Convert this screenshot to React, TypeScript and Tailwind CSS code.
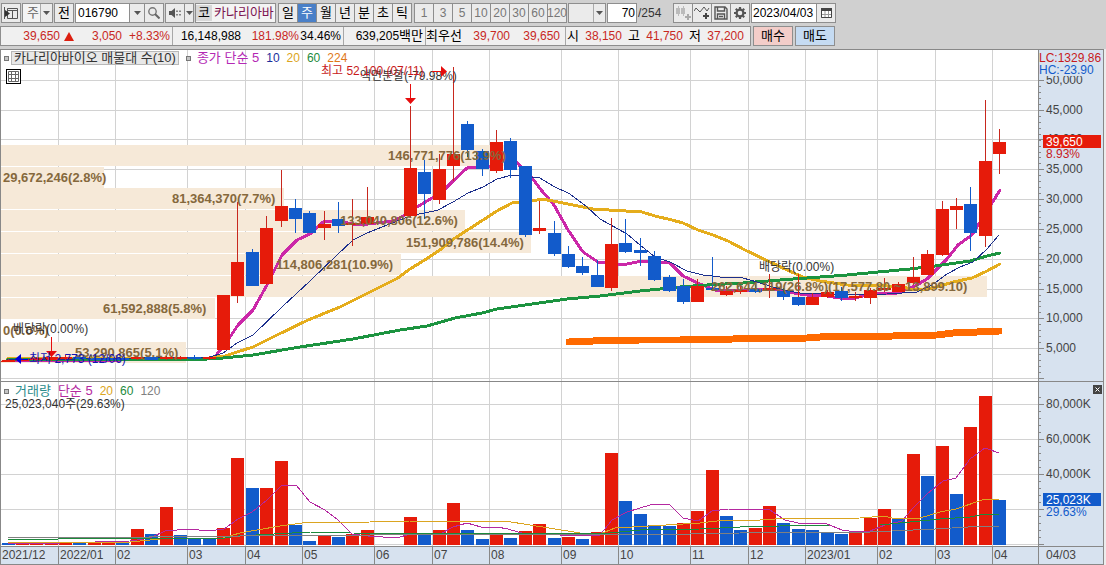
import { ReactNode } from "react";
import { clsx } from "clsx";

const RED = "#e61b0a";
const BLUE = "#125bcb";
const STEP = 14.37;
const centerOf = (i: number) => Math.floor(8 + STEP * i);

// [index, color, body top, body bottom, high, low]
type Candle = [number, "r" | "b", number, number, number, number];

const CANDLES: Candle[] = [
  [0, "r", 360, 361, 359, 361],
  [1, "r", 359, 361, 358, 361],
  [2, "r", 358, 360, 357, 361],
  [3, "r", 357, 360, 356, 361],
  [4, "r", 357, 359, 355, 360],
  [5, "b", 357, 359, 356, 360],
  [6, "b", 358, 360, 356, 361],
  [7, "b", 358, 360, 357, 361],
  [8, "b", 358, 360, 357, 360],
  [9, "r", 357, 359, 356, 360],
  [10, "b", 357, 360, 357, 360],
  [11, "r", 357, 359, 356, 360],
  [12, "r", 357, 359, 356, 360],
  [13, "b", 357, 359, 355, 360],
  [14, "r", 357, 359, 356, 360],
  [15, "r", 295, 350, 295, 350],
  [16, "r", 262, 296, 202, 303],
  [17, "b", 252, 286, 249, 286],
  [18, "r", 228, 284, 216, 285],
  [19, "r", 206, 221, 170, 227],
  [20, "b", 208, 219, 199, 233],
  [21, "b", 213, 233, 211, 233],
  [22, "r", 224, 228, 211, 240],
  [23, "b", 219, 226, 202, 233],
  [24, "r", 223, 225, 199, 246],
  [25, "r", 217, 224, 187, 224],
  [28, "r", 168, 216, 106, 217],
  [29, "b", 172, 194, 160, 219],
  [30, "r", 169, 200, 154, 204],
  [31, "r", 154, 166, 67, 181],
  [32, "b", 124, 150, 121, 157],
  [33, "b", 151, 169, 149, 176],
  [34, "r", 142, 171, 130, 173],
  [35, "b", 141, 170, 138, 178],
  [36, "b", 166, 235, 166, 237],
  [37, "r", 228, 231, 201, 234],
  [38, "b", 233, 254, 221, 256],
  [39, "b", 254, 267, 246, 268],
  [40, "b", 266, 273, 257, 275],
  [41, "b", 275, 287, 260, 287],
  [42, "r", 244, 288, 218, 291],
  [43, "b", 243, 252, 219, 253],
  [44, "b", 250, 253, 238, 266],
  [45, "b", 256, 280, 251, 281],
  [46, "b", 277, 291, 275, 292],
  [47, "b", 286, 302, 279, 304],
  [48, "r", 286, 302, 279, 302],
  [49, "b", 288, 290, 257, 290],
  [50, "r", 291, 295, 286, 296],
  [51, "r", 290, 292, 286, 294],
  [52, "b", 289, 292, 285, 293],
  [53, "r", 288, 290, 274, 298],
  [54, "b", 291, 297, 288, 300],
  [55, "b", 297, 305, 294, 306],
  [56, "r", 297, 305, 293, 305],
  [57, "r", 292, 297, 290, 298],
  [58, "b", 291, 298, 287, 301],
  [59, "r", 296, 298, 292, 301],
  [60, "r", 290, 298, 288, 304],
  [61, "r", 288, 290, 278, 292],
  [62, "r", 284, 292, 282, 292],
  [63, "r", 277, 283, 257, 285],
  [64, "r", 254, 275, 250, 275],
  [65, "r", 209, 255, 201, 256],
  [66, "r", 206, 210, 198, 229],
  [67, "b", 204, 233, 187, 251],
  [68, "r", 161, 236, 100, 247],
  [69, "r", 142, 154, 129, 174],
];

// [index, color, top]
const VOLUMES: [number, "r" | "b", number][] = [
  [0, "b", 543], [1, "r", 542], [2, "r", 543], [3, "r", 544], [4, "r", 542],
  [5, "b", 543], [6, "r", 543], [7, "r", 541], [8, "b", 543], [9, "r", 529],
  [10, "b", 534], [11, "r", 507], [12, "b", 535], [13, "b", 538], [14, "b", 539],
  [15, "r", 528], [16, "r", 458], [17, "b", 488], [18, "r", 488], [19, "r", 461],
  [20, "b", 525], [21, "b", 541], [22, "r", 536], [23, "b", 537], [24, "r", 534],
  [25, "r", 530], [28, "r", 517], [29, "b", 535], [30, "r", 530], [31, "r", 503],
  [32, "b", 530], [33, "b", 539], [34, "r", 535], [35, "b", 538], [36, "r", 531],
  [37, "r", 524], [38, "b", 538], [39, "r", 537], [40, "b", 539], [41, "r", 532],
  [42, "r", 453], [43, "b", 501], [44, "b", 514], [45, "b", 525], [46, "b", 526],
  [47, "r", 523], [48, "r", 511], [49, "r", 470], [50, "b", 516], [51, "b", 530],
  [52, "r", 528], [53, "r", 506], [54, "b", 523], [55, "b", 529], [56, "b", 530],
  [57, "b", 533], [58, "b", 534], [59, "r", 533], [60, "r", 518], [61, "r", 509],
  [62, "b", 519], [63, "r", 454], [64, "b", 476], [65, "r", 446], [66, "b", 494],
  [67, "r", 427], [68, "r", 396], [69, "b", 500],
];

const PROFILE = [
  { y: 145, end: 509, x: 388, label: "146,771,776(13.9%)" },
  { y: 167, end: 104, x: 3, label: "29,672,246(2.8%)" },
  { y: 188, end: 284, x: 172, label: "81,364,370(7.7%)" },
  { y: 210, end: 465, x: 340, label: "133,040,806(12.6%)" },
  { y: 232, end: 531, x: 406, label: "151,909,786(14.4%)" },
  { y: 254, end: 401, x: 276, label: "114,806,281(10.9%)" },
  { y: 276, end: 987, x: 711, label: "262,644,119(26.8%)(17,577.80 ~ 13,899.10)" },
  { y: 298, end: 215, x: 103, label: "61,592,888(5.8%)" },
  { y: 320, end: 1, x: 3, label: "0(0.0%)" },
  { y: 342, end: 186, x: 75, label: "53,290,865(5.1%)" },
];

const MONTHS: [number, string][] = [
  [0, "2021/12"], [58, "2022/01"], [115, "02"], [187, "03"], [245, "04"], [302, "05"],
  [374, "06"], [432, "07"], [489, "08"], [561, "09"], [618, "10"], [690, "11"],
  [748, "12"], [805, "2023/01"], [877, "02"], [935, "03"], [992, "04"],
];

const PRICE_LINES: [number, string][] = [
  [80, "50,000"], [110, "45,000"], [139, "40,000"], [169, "35,000"], [199, "30,000"],
  [229, "25,000"], [259, "20,000"], [289, "15,000"], [318, "10,000"], [348, "5,000"], [378, ""],
];

const VOLUME_LINES: [number, string][] = [
  [404, "80,000K"], [439, "60,000K"], [474, "40,000K"], [509, ""], [544, ""],
];

const MA5 =
  "7,360 120,360 205,359 215,357 230,337 238,325 253,310 267,285 282,255 297,240 310,234 323,222 337,221 353,224 368,224 393,221 403,216 417,207 432,198 445,189 453,181 467,168 488,167 503,160 515,160 520,166 532,178 542,191 554,205 568,230 583,252 598,262 612,264 627,264 642,261 655,262 670,263 683,276 700,284 715,290 747,291 760,289 777,289 787,292 807,295 827,296 840,298 855,298 870,294 897,293 915,286 927,279 937,269 947,259 958,245 972,235 978,225 987,213 992,203 1000,190";
const MA10 =
  "7,360 210,357 223,353 237,343 253,335 282,307 310,281 337,255 353,240 367,233 387,225 413,215 425,213 438,210 453,202 468,193 483,187 497,179 512,175 527,177 540,178 553,186 570,194 587,207 600,219 627,234 640,245 655,257 670,262 687,271 703,275 720,277 743,278 757,282 783,290 800,293 820,293 840,295 887,294 917,292 932,285 947,274 960,267 973,262 987,249 999,235";
const MA20 =
  "7,359 210,358 225,356 237,352 253,347 275,336 308,320 340,307 368,293 398,278 410,269 423,261 440,250 455,238 497,211 512,203 527,202 542,199 553,201 593,209 642,212 655,216 672,220 683,223 698,230 713,235 728,241 743,249 770,262 787,270 803,277 820,281 847,285 887,286 903,287 910,289 928,289 937,287 953,282 972,278 987,271 1000,264";
const MA60 =
  "7,360 210,359 223,358 253,355 300,347 353,339 400,330 427,326 455,318 482,313 497,309 525,305 567,299 600,296 640,291 680,287 707,285 743,283 780,280 807,278 847,275 910,269 935,266 970,261 987,256 1000,253";
const MA224 =
  "569,342 593,341 640,340 680,340 733,339 807,338 820,337 893,336 937,335 953,333 977,332 999,331";

const VOL5 =
  "8,543 60,543 130,541 150,538 165,531 190,529 208,531 224,529 238,519 252,512 267,500 282,485 296,485 310,502 325,510 338,520 352,534 368,536 397,538 410,534 440,534 453,527 467,523 481,527 497,527 508,529 525,534 560,535 600,535 612,520 627,512 650,505 669,504 683,518 698,521 712,511 728,509 770,510 785,520 798,523 827,524 842,530 855,532 870,531 885,525 902,521 913,508 927,494 943,481 956,478 970,459 985,448 999,453";
const VOL20 =
  "8,543 130,542 160,539 223,538 240,533 280,526 302,523 370,522 410,521 505,521 530,525 555,529 580,533 600,534 615,528 700,523 725,520 745,521 775,519 860,518 885,516 895,519 920,518 940,512 956,509 985,499 999,500";
const VOL60 =
  "8,539 58,539 59,538 225,538 238,536 310,532 350,533 600,534 640,530 700,529 740,527 780,526 830,525 880,525 940,519 970,517 985,514 999,514";
const VOL120 =
  "8,537 58,537 59,538 240,536 370,535 690,534 740,533 870,532 935,529 985,526 999,526";

const Caret = () => (
  <svg viewBox="0 0 7 4" className="h-1 w-[7px]">
    <path d="M0 0h7L3.5 4z" fill="#555" />
  </svg>
);

const IconButton = ({ label, className, children }: { label: string; className?: string; children: ReactNode }) => (
  <button
    aria-label={label}
    className={clsx("flex h-5 items-center justify-center border border-[#8e8e8e] bg-[#ebebeb]", className || "w-5")}
  >
    {children}
  </button>
);

const Combo = ({ label, value, className }: { label: string; value: string; className: string }) => (
  <div className={clsx("relative h-5 border border-[#8e8e8e]", className)}>
    <select aria-label={label} className="block h-full w-full appearance-none bg-transparent pl-1 leading-4 text-[#666]">
      <option>{value}</option>
    </select>
    <span className="pointer-events-none absolute inset-y-0 right-0 flex w-3 items-center justify-center border-l border-[#aaa] bg-[#ebebeb]">
      <Caret />
    </span>
  </div>
);

const Toolbar = () => (
  <header className="flex h-[26px] items-center gap-px pl-px text-[13px] text-black">
    <IconButton label="패널">
      <svg viewBox="0 0 14 12" className="h-3 w-[14px]">
        <path d="M3.5 1.5h10v10h-10zM3.5 3.5h10M8.5 3.5v8M.5 0v12" fill="none" stroke="#555" />
        <path d="M1 3l5 3.5L1 10z" fill="#333" />
      </svg>
    </IconButton>
    <Combo label="주기" value="주" className="w-[31px] bg-[#f4f4f4]" />
    <button className="h-5 w-5 border border-[#8e8e8e] bg-[#ebebeb] leading-4">전</button>
    <div className="flex">
      <input
        aria-label="종목코드"
        defaultValue="016790"
        className="h-5 w-[55px] border border-[#8e8e8e] bg-white pl-[2px] text-xs leading-4"
      />
      <IconButton label="종목 목록" className="-ml-px w-4">
        <Caret />
      </IconButton>
      <IconButton label="검색" className="-ml-px w-5">
        <svg viewBox="0 0 12 12" className="size-3">
          <circle cx="4.5" cy="4.5" r="3.7" fill="none" stroke="#777" strokeWidth="1.4" />
          <path d="M7 7l4.5 4.5" stroke="#666" strokeWidth="2" />
        </svg>
      </IconButton>
    </div>
    <div className="flex">
      <IconButton label="소리">
        <svg viewBox="0 0 13 10" className="h-[10px] w-[13px]">
          <path d="M0 3h2.5L6 0v10L2.5 7H0z" fill="#555" />
          <path d="M8 2.5V4M8 6v1.5M11 2.5V4M11 6v1.5" stroke="#666" strokeWidth="1.5" />
        </svg>
      </IconButton>
      <IconButton label="소리 설정" className="-ml-px w-[10px]">
        <Caret />
      </IconButton>
    </div>
    <div className="flex h-5 w-[81px] items-center overflow-hidden border border-[#8e8e8e] bg-[#f4f4f4] whitespace-nowrap">
      <span className="w-4 bg-[#d8d8d8] text-center leading-4">코</span>
      <span className="pl-[2px] leading-4 text-[#7d1552]">카나리아바</span>
    </div>
    <div className="flex pl-[2px]">
      {["일", "주", "월", "년", "분", "초", "틱"].map((p) => (
        <button
          key={p}
          className={clsx(
            "-ml-px h-5 w-5 border border-[#8e8e8e] leading-4",
            p === "주" ? "bg-[#4a80c8] text-white" : "bg-[#ebebeb]"
          )}
        >
          {p}
        </button>
      ))}
    </div>
    <div className="flex pl-[2px]">
      {["1", "3", "5", "10", "20", "30", "60", "120"].map((n) => (
        <button
          key={n}
          className="-ml-px flex h-5 w-5 items-center justify-center border border-[#8e8e8e] bg-[#ebebeb] text-xs leading-4 text-[#777]"
        >
          {n}
        </button>
      ))}
    </div>
    <Combo label="분 단위" value="" className="w-[38px] bg-[#ebebeb]" />
    <label className="flex items-center text-xs">
      <input
        aria-label="조회 개수"
        defaultValue="70"
        className="h-5 w-[30px] border border-[#8e8e8e] bg-white pr-px text-right leading-4"
      />
      <span className="w-[35px] pl-px leading-4 text-[#333]">/254</span>
    </label>
    <div className="flex">
      <IconButton label="차트 비교">
        <svg viewBox="0 0 16 14" className="h-[14px] w-4">
          <path d="M3.5 0v10M8.5 0v10" stroke="#bbb" />
          <path d="M1 2h4v6H1zM6 2h4v6H6z" fill="#bbb" />
          <path d="M13 8v6M10 11h6" stroke="#aaa" strokeWidth="2" />
        </svg>
      </IconButton>
      <IconButton label="지표 추가" className="-ml-px w-5">
        <svg viewBox="0 0 16 14" className="h-[14px] w-4">
          <path d="M0 5l2-3 4 4 4-5 3 4 2-3" fill="none" stroke="#555" />
          <path d="M12 7v6M9 10h6" stroke="#444" strokeWidth="2" />
        </svg>
      </IconButton>
      <IconButton label="저장" className="-ml-px w-5">
        <svg viewBox="0 0 14 14" className="size-[14px]">
          <path d="M1 1h10l2 2v10H1zM3.5 1v4h7V1M3.500 13V8h7v5M5 10.500h4" fill="none" stroke="#555" strokeWidth="1.4" />
        </svg>
      </IconButton>
      <IconButton label="설정" className="-ml-px w-5">
        <svg viewBox="0 0 14 14" className="size-[14px]">
          <circle cx="7" cy="7" r="3.4" fill="none" stroke="#555" strokeWidth="2.2" />
          <path
            d="M7 1v2M7 11v2M1 7h2M11 7h2M2.8 2.8l1.4 1.4M9.8 9.8l1.4 1.4M2.8 11.2l1.4-1.4M9.8 4.2l1.4-1.4"
            stroke="#555"
            strokeWidth="2.2"
          />
        </svg>
      </IconButton>
    </div>
    <div className="flex">
      <input
        aria-label="기준일"
        defaultValue="2023/04/03"
        className="h-5 w-[66px] border border-[#8e8e8e] bg-white pl-px text-xs leading-4"
      />
      <IconButton label="달력" className="-ml-px w-5">
        <svg viewBox="0 0 11 10" className="h-[10px] w-[11px]">
          <path d="M.5.5h10v9H.5zM.5 6.5h10M4 3v6M7.500 3v6" fill="#fff" stroke="#999" />
          <path d="M0 0h11v3H0z" fill="#444" />
          <path d="M.5 2v7.5h10V2" fill="none" stroke="#444" />
        </svg>
      </IconButton>
    </div>
  </header>
);

const Cell = ({ className, children }: { className: string; children: ReactNode }) => (
  <div className={clsx("flex items-center justify-end border-r border-[#a8a8a8] pr-[2px]", className)}>{children}</div>
);

const QuoteRow = () => (
  <div className="flex h-5 gap-[2px] text-xs leading-[18px] whitespace-nowrap text-black">
    <div className="flex border border-[#8e8e8e] bg-[#f0f0f0]">
      <Cell className="w-[172px] text-[#c8281e]">
        <span>39,650</span>
        <svg viewBox="0 0 10 9" className="ml-1 h-[9px] w-[10px]">
          <path d="M5 0l5 9H0z" fill="#dc1f10" />
        </svg>
        <span className="w-12 text-right">3,050</span>
        <span className="w-12 text-right">+8.33%</span>
      </Cell>
      <Cell className="w-[171px]">
        <span>16,148,988</span>
        <span className="w-[58px] text-right text-[#c8281e]">181.98%</span>
        <span className="w-[42px] text-right">34.46%</span>
      </Cell>
      <Cell className="w-[82px]">
        <span>639,205</span>
        <span className="text-[13px]">백만</span>
      </Cell>
      <Cell className="w-[140px] pr-[5px] text-[#c8281e]">
        <span className="text-[13px] text-black">최우선</span>
        <span className="w-12 text-right">39,700</span>
        <span className="w-[50px] text-right">39,650</span>
      </Cell>
      <div className="flex items-center pr-[6px] pl-px text-[#c8281e]">
        <span className="text-[13px] text-black">시</span>
        <span className="w-[43px] text-right">38,150</span>
        <span className="pl-[6px] text-[13px] text-black">고</span>
        <span className="w-[43px] text-right">41,750</span>
        <span className="pl-[6px] text-[13px] text-black">저</span>
        <span className="w-[43px] text-right">37,200</span>
      </div>
    </div>
    <button className="w-10 border border-[#8e8e8e] bg-[#f3cdc9] text-[13px]">매수</button>
    <button className="w-10 border border-[#8e8e8e] bg-[#c5dbf2] text-[13px]">매도</button>
  </div>
);

const Frame = ({ top, bottom }: { top: number; bottom: number }) => (
  <g shapeRendering="crispEdges">
    <rect x="0" y={top} width="1104" height={bottom - top} fill="#fff" />
    <rect x="1038" y={top} width="66" height={bottom - top} fill="#d7e2ef" />
    {MONTHS.slice(1).map(([x]) => (
      <rect key={x} x={x} y={top} width="1" height={bottom - top} fill="#d2d2d2" />
    ))}
    <rect x="0" y={top} width="1" height={bottom - top} fill="#888" />
    <rect x="1038" y={top} width="1" height={bottom - top} fill="#888" />
    <rect x="1103" y={top} width="1" height={bottom - top} fill="#888" />
    <rect x="1104" y={top} width="2" height={bottom - top} fill="#ececec" />
  </g>
);

const Line = ({ points, color, width = 1 }: { points: string; color: string; width?: number }) => (
  <polyline
    points={points}
    fill="none"
    stroke={color}
    strokeWidth={width}
    strokeLinejoin="round"
    strokeLinecap="round"
    shapeRendering="crispEdges"
  />
);

const priceTicks = Array.from({ length: 50 }, (_, i) => Math.round(378 - (i + 1) * 5.96));
const volumeTicks = Array.from({ length: 22 }, (_, i) => 544 - i * 7);

const PriceChart = () => (
  <svg viewBox="0 49 1106 333" className="block w-full text-xs">
    <Frame top={49} bottom={382} />
    <g shapeRendering="crispEdges">
      {PRICE_LINES.map(([y]) => (
        <rect key={y} x="1" y={y} width="1037" height="1" fill="#d2d2d2" />
      ))}
      {PRICE_LINES.map(([y]) => (
        <rect key={y} x="1039" y={y} width="5" height="1" fill="#888" />
      ))}
      {priceTicks.map((y) => (
        <rect key={y} x="1039" y={y} width="2" height="1" fill="#888" />
      ))}
      {PROFILE.map((p) => (
        <rect key={p.y} x="1" y={p.y} width={p.end - 1} height="21" fill="#f6e9d8" />
      ))}
    </g>
    <Line points={MA224} color="#ff6a00" width={7} />
    <Line points={MA5} color="#cb27a8" width={3} />
    <Line points={MA20} color="#e5ad1c" width={3} />
    <Line points={MA60} color="#1c9440" width={3} />
    <Line points={MA10} color="#1c2f8c" />
    <g shapeRendering="crispEdges">
      {CANDLES.map(([i, c, top, bottom, high, low]) => (
        <g key={i} fill={c === "r" ? RED : BLUE}>
          <rect x={centerOf(i)} y={high} width="1" height={low - high} fill={c === "r" ? "#c8281e" : BLUE} />
          <rect x={centerOf(i) - 6} y={top} width="13" height={bottom - top} />
        </g>
      ))}
      <rect x="798" y="274" width="1" height="23" fill={RED} />
      <rect x="1" y="361" width="14" height="1" fill={RED} />
    </g>

    <g fill="#85683c" className="text-[13px] font-bold">
      {PROFILE.map((p) => (
        <text key={p.y} x={p.x} y={p.y + 15}>
          {p.label}
        </text>
      ))}
    </g>
    <g fill="#333">
      <text x="13" y="333">배당락(0.00%)</text>
      <text x="759" y="271">배당락(0.00%)</text>
      <text x="360" y="80">액면분할(-79.98%)</text>
    </g>
    <g fill="#c8191b">
      <text x="321" y="75">최고 52,100 (07/11)</text>
      <path d="M432 71.5h9M410.5 84v15M51.5 337v15" stroke="#e60d0d" />
      <path d="M441 66l6 5.5-6 5.5zM405 98h11l-5.5 6zM46 351h11l-5.5 6z" fill="#e60d0d" />
    </g>
    <g fill="#1414b4">
      <text x="29" y="363">최저 2,773 (12/06)</text>
      <path d="M15 359l6-5v10zM21 359h7v1h-7z" fill="#0000dc" />
    </g>

    <g fill="#444">
      {PRICE_LINES.map(([y, label]) => (
        <text key={y} x="1046" y={y + 4}>
          {label}
        </text>
      ))}
    </g>
    <rect x="1039" y="50" width="64" height="26" fill="#d7e2ef" />
    <text x="1039" y="62" fill="#c8191b">LC:1329.86</text>
    <text x="1039" y="74" fill="#125bcb">HC:-23.90</text>
    <rect x="1043" y="135" width="58" height="13" fill={RED} />
    <text x="1046" y="146" fill="#fff">39,650</text>
    <text x="1046" y="158" fill="#c8191b">8.93%</text>
    <path d="M0 49.5h1104M0 381.5h1104" stroke="#888" />
  </svg>
);

const VolumeChart = () => (
  <svg viewBox="0 382 1106 164" className="block w-full text-xs">
    <Frame top={382} bottom={546} />
    <g shapeRendering="crispEdges">
      {VOLUME_LINES.map(([y]) => (
        <rect key={y} x="1" y={y} width="1037" height="1" fill="#d2d2d2" />
      ))}
      {VOLUME_LINES.map(([y]) => (
        <rect key={y} x="1039" y={y} width="5" height="1" fill="#888" />
      ))}
      {volumeTicks.map((y) => (
        <rect key={y} x="1039" y={y} width="2" height="1" fill="#888" />
      ))}
      {VOLUMES.map(([i, c, top]) => (
        <rect key={i} x={centerOf(i) - 6} y={top} width="13" height={545 - top} fill={c === "r" ? RED : BLUE} />
      ))}
    </g>
    <Line points={VOL5} color="#b428a0" />
    <Line points={VOL20} color="#dba520" />
    <Line points={VOL60} color="#1c8a3c" />
    <Line points={VOL120} color="#808080" />
    <g fill="#444">
      {VOLUME_LINES.map(([y, label]) => (
        <text key={y} x="1046" y={y + 4}>
          {label}
        </text>
      ))}
    </g>
    <rect x="1043" y="493" width="58" height="13" fill={BLUE} />
    <text x="1046" y="504" fill="#fff">25,023K</text>
    <text x="1046" y="516" fill={BLUE}>29.63%</text>
  </svg>
);

const DateAxis = () => (
  <svg viewBox="0 546 1106 19" className="block w-full text-xs">
    <rect x="0" y="546" width="1104" height="19" fill="#d7e2ef" />
    <rect x="1104" y="546" width="2" height="19" fill="#ececec" />
    <path d="M0 546.5h1104M0 564.5h1104M.5 546v19M1038.5 546v19M1103.5 546v19" stroke="#888" />
    {MONTHS.map(([x, label]) => (
      <g key={x}>
        <path d={`M${x + 0.5} 546v18`} stroke="#888" />
        <text x={x + 2} y="559" fill="#444">
          {label}
        </text>
      </g>
    ))}
    <text x="1046" y="559" fill="#444">04/03</text>
  </svg>
);

const Marker = () => <span className="size-[5px] border border-[#777] bg-[#c4c4c4]" />;

export default function App() {
  return (
    <main className="bg-[#d0d0d0] font-['Liberation_Sans','Noto_Sans_CJK_KR',sans-serif]">
      <Toolbar />
      <QuoteRow />
      <section className="relative mt-[3px]">
        <PriceChart />
        <div className="absolute top-[2px] left-1 flex items-center text-xs leading-[14px] whitespace-nowrap">
          <Marker />
          <span className="mr-[7px] ml-[2px] border border-[#b8b8b8] bg-[#e8e8e8] px-[2px] text-[13px] leading-3 text-[#333]">
            카나리아바이오 매물대 수(10)
          </span>
          <Marker />
          <span className="ml-[6px] flex gap-[7px]">
            <span className="text-[13px] text-[#b428b4]">종가 단순 5</span>
            <span className="text-[#1c2f9c]">10</span>
            <span className="text-[#dba520]">20</span>
            <span className="text-[#1c8a3c]">60</span>
            <span className="text-[#e07818]">224</span>
          </span>
        </div>
        <button aria-label="표 보기" className="absolute top-5 left-[6px] border border-black bg-white p-px">
          <svg viewBox="0 0 11 11" className="size-[11px]">
            <path d="M.5.5h10v10H.5zM.5 3.5h10M.5 7.500h10M3.500.5v10M7.500.5v10" fill="none" stroke="#666" />
          </svg>
        </button>
      </section>
      <section className="relative">
        <VolumeChart />
        <div className="absolute top-[2px] left-1 text-xs leading-[14px] whitespace-nowrap">
          <div className="flex items-center gap-[7px]">
            <span className="flex items-center gap-[6px] text-[13px] text-[#2a8c8c]">
              <Marker />
              거래량
            </span>
            <span className="text-[13px] text-[#b428a0]">단순 5</span>
            <span className="text-[#dba520]">20</span>
            <span className="text-[#1c8a3c]">60</span>
            <span className="text-[#808080]">120</span>
          </div>
          <div className="pl-px leading-3 text-[#333]">25,023,040주(29.63%)</div>
        </div>
        <button aria-label="닫기" className="absolute top-[3px] right-1 bg-[#444] p-[2px]">
          <svg viewBox="0 0 5 5" className="size-[5px]">
            <path d="M.5.5l4 4M4.500.5l-4 4" stroke="#fff" />
          </svg>
        </button>
      </section>
      <DateAxis />
    </main>
  );
}
